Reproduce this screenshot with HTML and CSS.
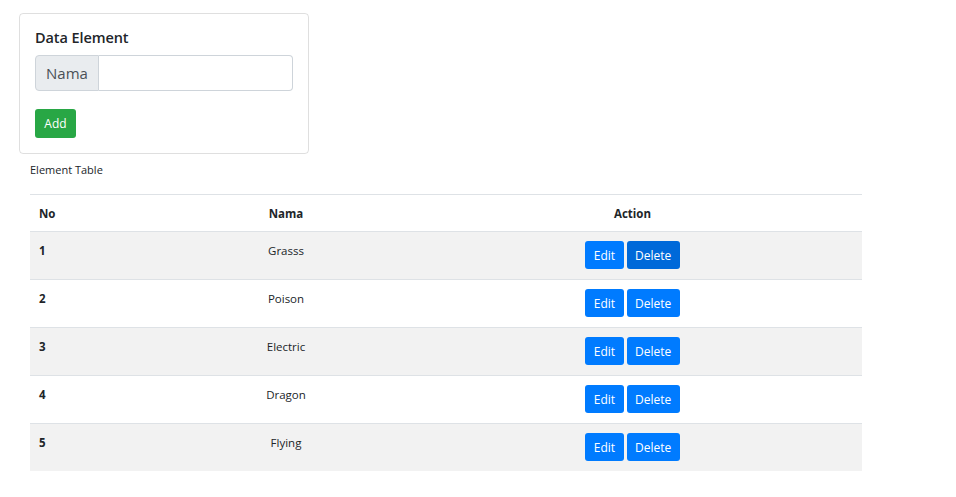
FILE: index.html
```html
<!DOCTYPE html>
<html>
<head>
<meta charset="utf-8">
<link rel="stylesheet" href="styles.css">
</head>
<body>
<div class="page">
  <div class="card">
    <div class="card-title">Data Element</div>
    <div class="input-group">
      <span class="prepend">Nama</span>
      <input class="field" type="text">
    </div>
    <button class="btn btn-green">Add</button>
  </div>
  <div class="caption">Element Table</div>
  <table class="tbl">
    <thead>
      <tr><th class="c-no">No</th><th class="c-nama">Nama</th><th class="c-act">Action</th></tr>
    </thead>
    <tbody>
      <tr><td class="c-no b">1</td><td class="c-nama">Grasss</td><td class="c-act"><button class="btn btn-blue">Edit</button> <button class="btn btn-blue hover">Delete</button></td></tr>
      <tr><td class="c-no b">2</td><td class="c-nama">Poison</td><td class="c-act"><button class="btn btn-blue">Edit</button> <button class="btn btn-blue">Delete</button></td></tr>
      <tr><td class="c-no b">3</td><td class="c-nama">Electric</td><td class="c-act"><button class="btn btn-blue">Edit</button> <button class="btn btn-blue">Delete</button></td></tr>
      <tr><td class="c-no b">4</td><td class="c-nama">Dragon</td><td class="c-act"><button class="btn btn-blue">Edit</button> <button class="btn btn-blue">Delete</button></td></tr>
      <tr><td class="c-no b">5</td><td class="c-nama">Flying</td><td class="c-act"><button class="btn btn-blue">Edit</button> <button class="btn btn-blue">Delete</button></td></tr>
    </tbody>
  </table>
</div>
</body>
</html>
```
FILE: styles.css
```css
* { box-sizing: border-box; }
body {
  margin: 0;
  font-family: "Open Sans", "Noto Sans", sans-serif;
  color: #212529;
  background: #fff;
}
.page { padding-top: 13px; }
.card {
  margin-left: 19px;
  width: 290px;
  height: 141px;
  border: 1px solid rgba(0,0,0,.125);
  border-radius: 4px;
  padding: 15px 15px 15px 15px;
}
.card-title {
  font-size: 14.5px;
  font-weight: 600;
  line-height: 18px;
  margin: 0 0 8px 0;
  letter-spacing: -0.1px;
}
.input-group {
  display: flex;
  height: 36px;
  margin-bottom: 18px;
}
.prepend {
  display: flex;
  align-items: center;
  padding: 0 11px;
  width: 64px;
  justify-content: center;
  background: #e9ecef;
  border: 1px solid #ced4da;
  border-radius: 4px 0 0 4px;
  color: #495057;
  font-size: 15px;
}
.field {
  flex: 1;
  min-width: 0;
  border: 1px solid #ced4da;
  border-left: none;
  border-radius: 0 4px 4px 0;
  outline: none;
  font-size: 15px;
  margin: 0;
}
.btn {
  font-family: inherit;
  border: none;
  color: #fff;
  border-radius: 3px;
  font-size: 12px;
  height: 28px;
  padding: 0 8.5px;
  cursor: pointer;
  vertical-align: top;
  margin: 0;
}
.btn-green { background: #28a745; height: 29px; width: 41px; padding: 0; }
.btn-blue { background: #007bff; }
.btn-blue.hover { background: #0069d9; }
.caption {
  margin: 8px 0 0 30px;
  font-size: 11px;
  line-height: 15px;
  height: 15px;
}
.tbl {
  margin: 17px 0 0 30px;
  width: 832px;
  border-collapse: collapse;
  font-size: 11.5px;
}
.tbl th {
  font-weight: 700;
  padding: 10px 9px 8px;
  line-height: 18px;
  border-top: 1px solid #dee2e6;
  border-bottom: 1px solid #dee2e6;
}
.tbl td {
  padding: 10px 9px;
  line-height: 18px;
  vertical-align: top;
  border-top: 1px solid #dee2e6;
  height: 47px;
}
.tbl td.c-act { padding-top: 9px; }
.tbl tbody tr:nth-child(odd) { background: #f2f2f2; }
.c-no { text-align: left; width: 139px; }
.c-nama { text-align: center; width: 234px; }
.c-act { text-align: center; }
.b { font-weight: 700; }
```
